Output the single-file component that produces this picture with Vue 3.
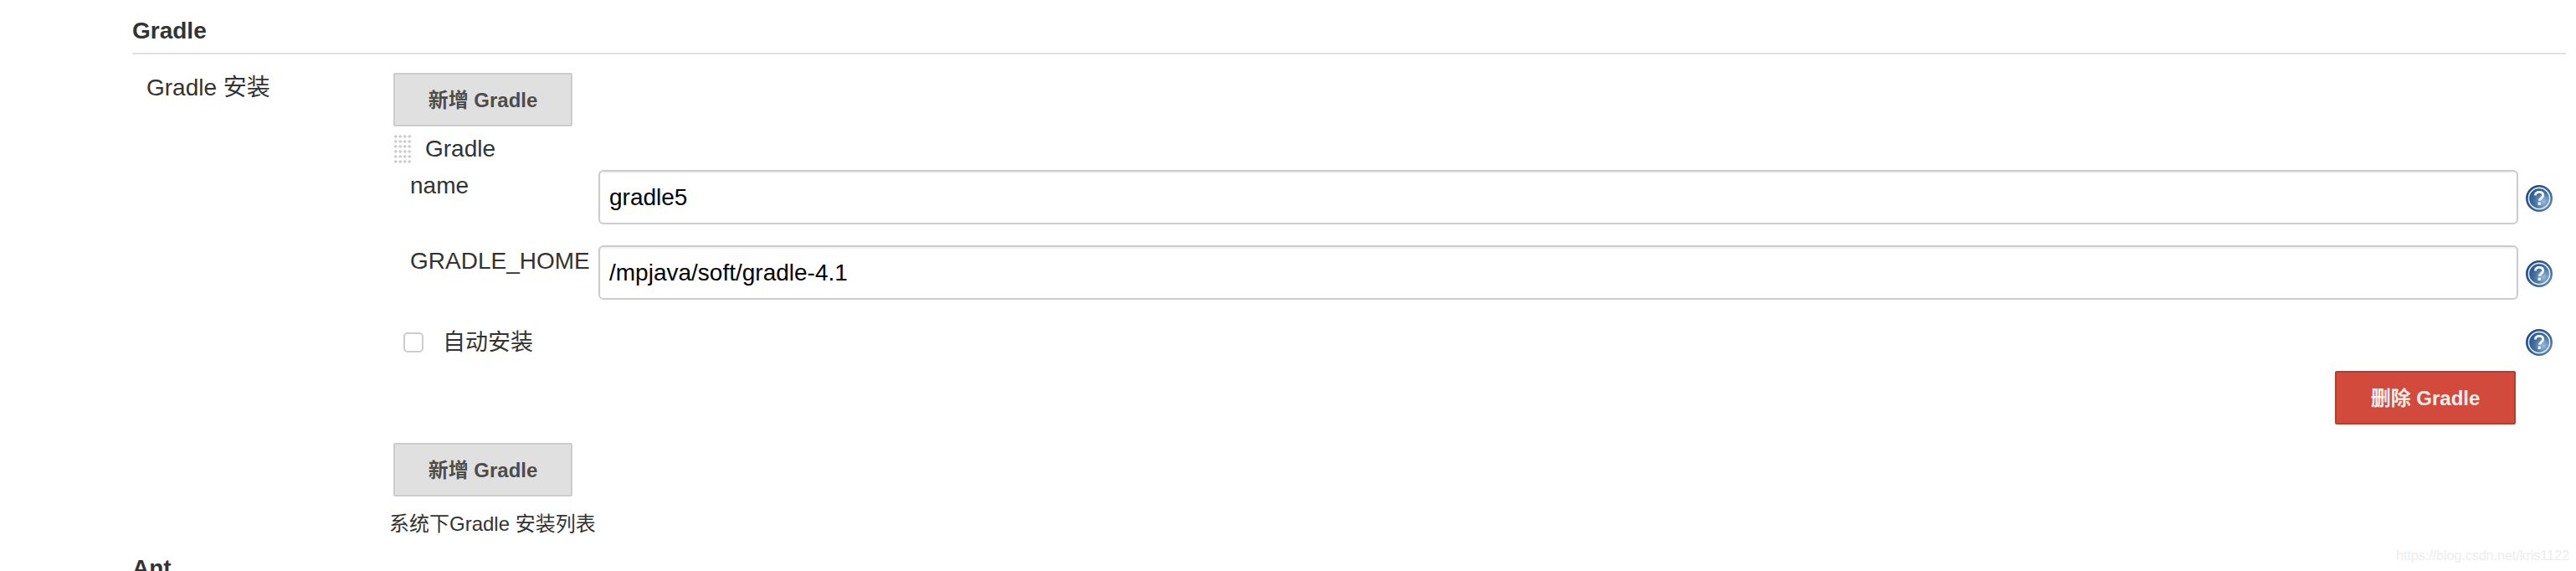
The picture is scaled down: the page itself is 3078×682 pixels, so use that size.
<script setup>
const fields = [
  { label: 'name', value: 'gradle5' },
  { label: 'GRADLE_HOME', value: '/mpjava/soft/gradle-4.1' }
]
</script>

<template>
  <div class="page">
    <h3 class="section-title">Gradle</h3>
    <div class="install-row">
      <div class="install-label">Gradle 安装</div>
      <div class="install-body">
        <button class="btn add">新增 Gradle</button>
        <div class="chunk-head">
          <span class="handle"></span>
          <span>Gradle</span>
        </div>
        <div class="fields">
          <div v-for="f in fields" :key="f.label" class="field">
            <label class="field-label">{{ f.label }}</label>
            <input class="field-input" type="text" :value="f.value" readonly />
            <svg class="help" viewBox="0 0 32 32">
              <use href="#help-icon" />
            </svg>
          </div>
        </div>
        <div class="auto-row">
          <input class="check" type="checkbox" />
          <span class="check-label">自动安装</span>
          <svg class="help" viewBox="0 0 32 32">
            <defs>
              <radialGradient id="help-bg" cx="0.66" cy="0.62" r="0.66">
                <stop offset="0" stop-color="#9dbbdc" />
                <stop offset="0.5" stop-color="#44739f" />
                <stop offset="1" stop-color="#1f4a8a" />
              </radialGradient>
              <g id="help-icon">
                <circle cx="16" cy="16" r="16" fill="url(#help-bg)" />
                <circle cx="16" cy="16" r="12.6" fill="none" stroke="#dfe7f2" stroke-width="1.6" />
                <path d="M11.4 12.6c0-2.8 2-4.3 4.7-4.3s4.6 1.5 4.6 3.9c0 3.2-4.3 3.5-4.3 6.6" fill="none" stroke="#f4f6fa" stroke-width="2.8" />
                <rect x="14.6" y="20.6" width="3.2" height="3.4" fill="#f4f6fa" />
              </g>
            </defs>
            <use href="#help-icon" />
          </svg>
        </div>
        <div class="delete-row">
          <button class="btn delete">删除 Gradle</button>
        </div>
        <button class="btn add second">新增 Gradle</button>
        <div class="hint">系统下Gradle 安装列表</div>
      </div>
    </div>
    <h3 class="section-title next">Ant</h3>
    <span class="watermark">https://blog.csdn.net/kris1122</span>
  </div>
</template>

<style scoped>
.page {
  position: relative;
  box-sizing: border-box;
  height: 682px;
  overflow: hidden;
  padding: 0 12px 0 158px;
  background: #fff;
  color: #333;
  font-family: "Liberation Sans", "Noto Sans CJK SC", sans-serif;
  font-size: 28px;
}
.section-title {
  margin: 0;
  box-sizing: border-box;
  height: 65px;
  padding-top: 21px;
  line-height: 32px;
  font-size: 28px;
  font-weight: 700;
  border-bottom: 2px solid #e0e0e0;
}
.section-title.next {
  border-bottom: 0;
  padding-top: 0;
  margin-top: 21px;
}
.install-row {
  display: flex;
}
.install-label {
  flex: none;
  width: 312px;
  box-sizing: border-box;
  padding: 24px 0 0 17px;
  line-height: 32px;
}
.install-body {
  flex: 1;
  min-width: 0;
  padding-top: 22px;
}
.btn {
  display: block;
  box-sizing: border-box;
  width: 214px;
  height: 64px;
  padding: 0 0 3px;
  border-radius: 2px;
  font-family: inherit;
  font-size: 24px;
  font-weight: 700;
}
.add {
  background: #e0e0e0;
  border: 2px solid #ccc;
  color: #4d4d4d;
}
.add.second {
  margin-top: 22px;
}
.delete {
  width: 216px;
  background: #d24a3c;
  border: 2px solid #b93b2d;
  color: #f4f0ef;
}
.chunk-head {
  display: flex;
  align-items: center;
  height: 36px;
  margin-top: 9px;
  line-height: 36px;
}
.handle {
  width: 22px;
  height: 36px;
  margin-right: 16px;
  background-image: radial-gradient(circle, #ccc 1.4px, transparent 2px);
  background-size: 5.5px 6px;
}
.fields {
  display: flex;
  flex-direction: column;
  gap: 25px;
  margin-top: 7px;
}
.field {
  display: flex;
  align-items: flex-start;
}
.field-label {
  flex: none;
  width: 245px;
  box-sizing: border-box;
  padding: 3px 0 0 20px;
  line-height: 32px;
  white-space: nowrap;
}
.field-input {
  flex: 1;
  min-width: 0;
  box-sizing: border-box;
  height: 65px;
  padding: 0 11px;
  border: 2px solid #ccc;
  border-radius: 6px;
  box-shadow: inset 0 2px 2px rgba(0, 0, 0, 0.06);
  outline: none;
  font-family: inherit;
  font-size: 28px;
  color: #000;
}
.help {
  flex: none;
  width: 32px;
  height: 32px;
  margin: 18px 16px 0 9px;
}
.auto-row {
  display: flex;
  align-items: center;
  height: 32px;
  margin-top: 35px;
}
.check {
  appearance: none;
  box-sizing: border-box;
  width: 24px;
  height: 24px;
  margin: 0 0 0 12px;
  background: #fff;
  border: 2px solid #ccc;
  border-radius: 5px;
}
.check-label {
  flex: 1;
  margin-left: 23px;
  font-size: 27px;
  line-height: 32px;
}
.auto-row .help {
  margin-top: 0;
}
.delete-row {
  display: flex;
  justify-content: flex-end;
  margin: 18px 60px 0 0;
}
.hint {
  margin: 17px 0 0 -5px;
  font-size: 24px;
  line-height: 32px;
}
.watermark {
  position: absolute;
  left: 2863px;
  top: 654px;
  font-size: 16px;
  line-height: 20px;
  color: #ededed;
  white-space: nowrap;
}
</style>

<style>
body {
  margin: 0;
}
</style>
